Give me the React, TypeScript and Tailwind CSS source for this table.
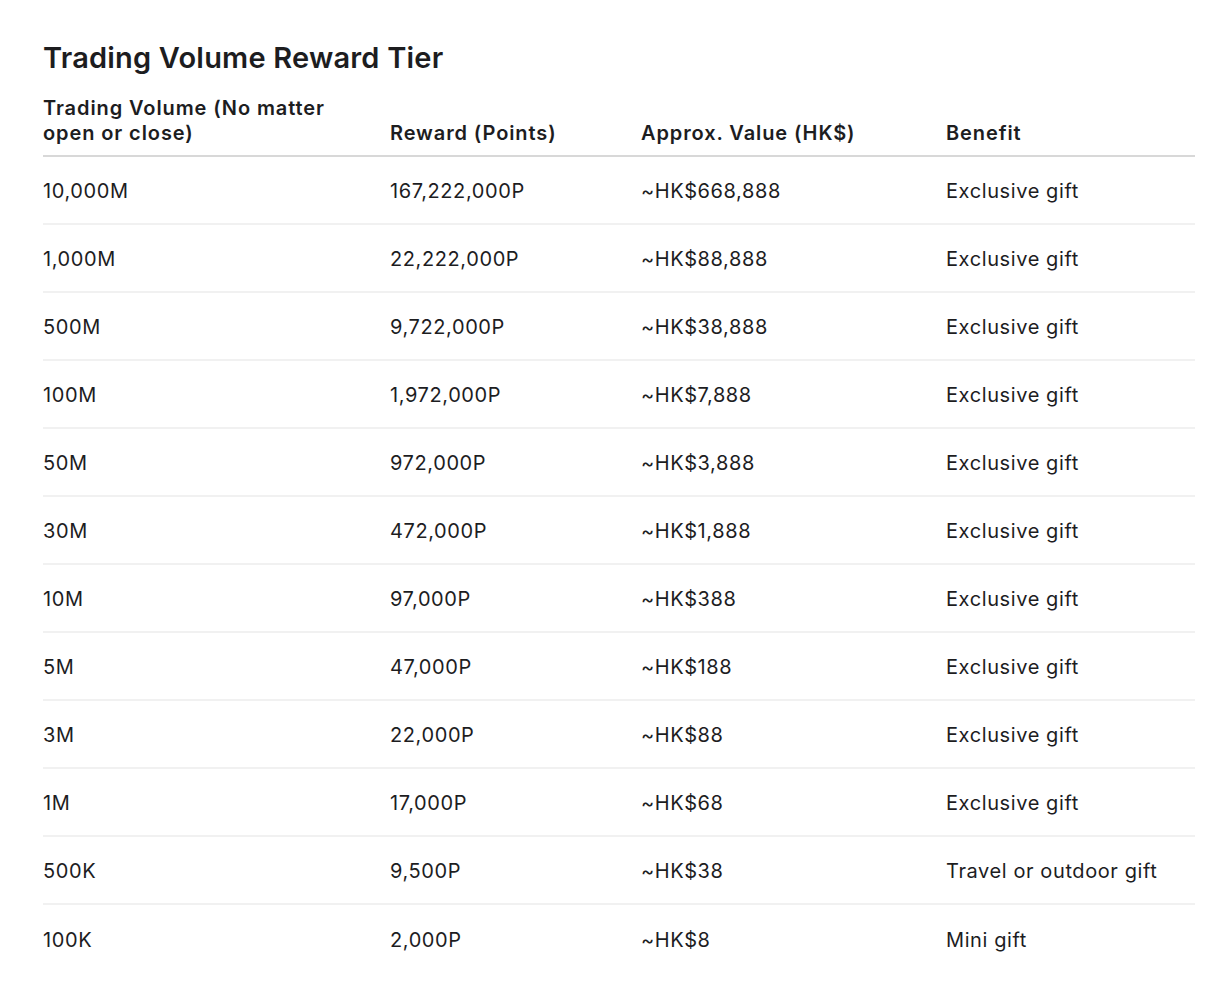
const rows = [
  ["10,000M", "167,222,000P", "~HK$668,888", "Exclusive gift"],
  ["1,000M", "22,222,000P", "~HK$88,888", "Exclusive gift"],
  ["500M", "9,722,000P", "~HK$38,888", "Exclusive gift"],
  ["100M", "1,972,000P", "~HK$7,888", "Exclusive gift"],
  ["50M", "972,000P", "~HK$3,888", "Exclusive gift"],
  ["30M", "472,000P", "~HK$1,888", "Exclusive gift"],
  ["10M", "97,000P", "~HK$388", "Exclusive gift"],
  ["5M", "47,000P", "~HK$188", "Exclusive gift"],
  ["3M", "22,000P", "~HK$88", "Exclusive gift"],
  ["1M", "17,000P", "~HK$68", "Exclusive gift"],
  ["500K", "9,500P", "~HK$38", "Travel or outdoor gift"],
  ["100K", "2,000P", "~HK$8", "Mini gift"],
]

const cols = "grid grid-cols-[347px_251px_305px_1fr]"

export default function App() {
  return (
    <div className="min-h-screen bg-white text-[#1d1d1f] font-['Inter',sans-serif] px-[43px] pt-[40px]" style={{ width: 1226 }}>
      <h2 className="text-[29px] font-semibold leading-[36px] tracking-[0.2px]">Trading Volume Reward Tier</h2>
      <div className="w-[1152px] mt-[20px]">
        <div className={`${cols} items-end border-b-2 border-[#d8d8d8] pb-[9px] text-[20px] font-semibold leading-[25px] tracking-[0.9px]`}>
          <div className="max-w-[295px]">Trading Volume (No matter open or close)</div>
          <div>Reward (Points)</div>
          <div>Approx. Value (HK$)</div>
          <div>Benefit</div>
        </div>
        {rows.map((r, i) => (
          <div
            key={r[0]}
            className={`${cols} items-center h-[68px] pt-[1px] text-[20px] tracking-[0.6px] ${i < rows.length - 1 ? "border-b-2 border-[#f1f1f1]" : ""}`}
          >
            {r.map((c, j) => (
              <div key={j}>{c}</div>
            ))}
          </div>
        ))}
      </div>
    </div>
  )
}
